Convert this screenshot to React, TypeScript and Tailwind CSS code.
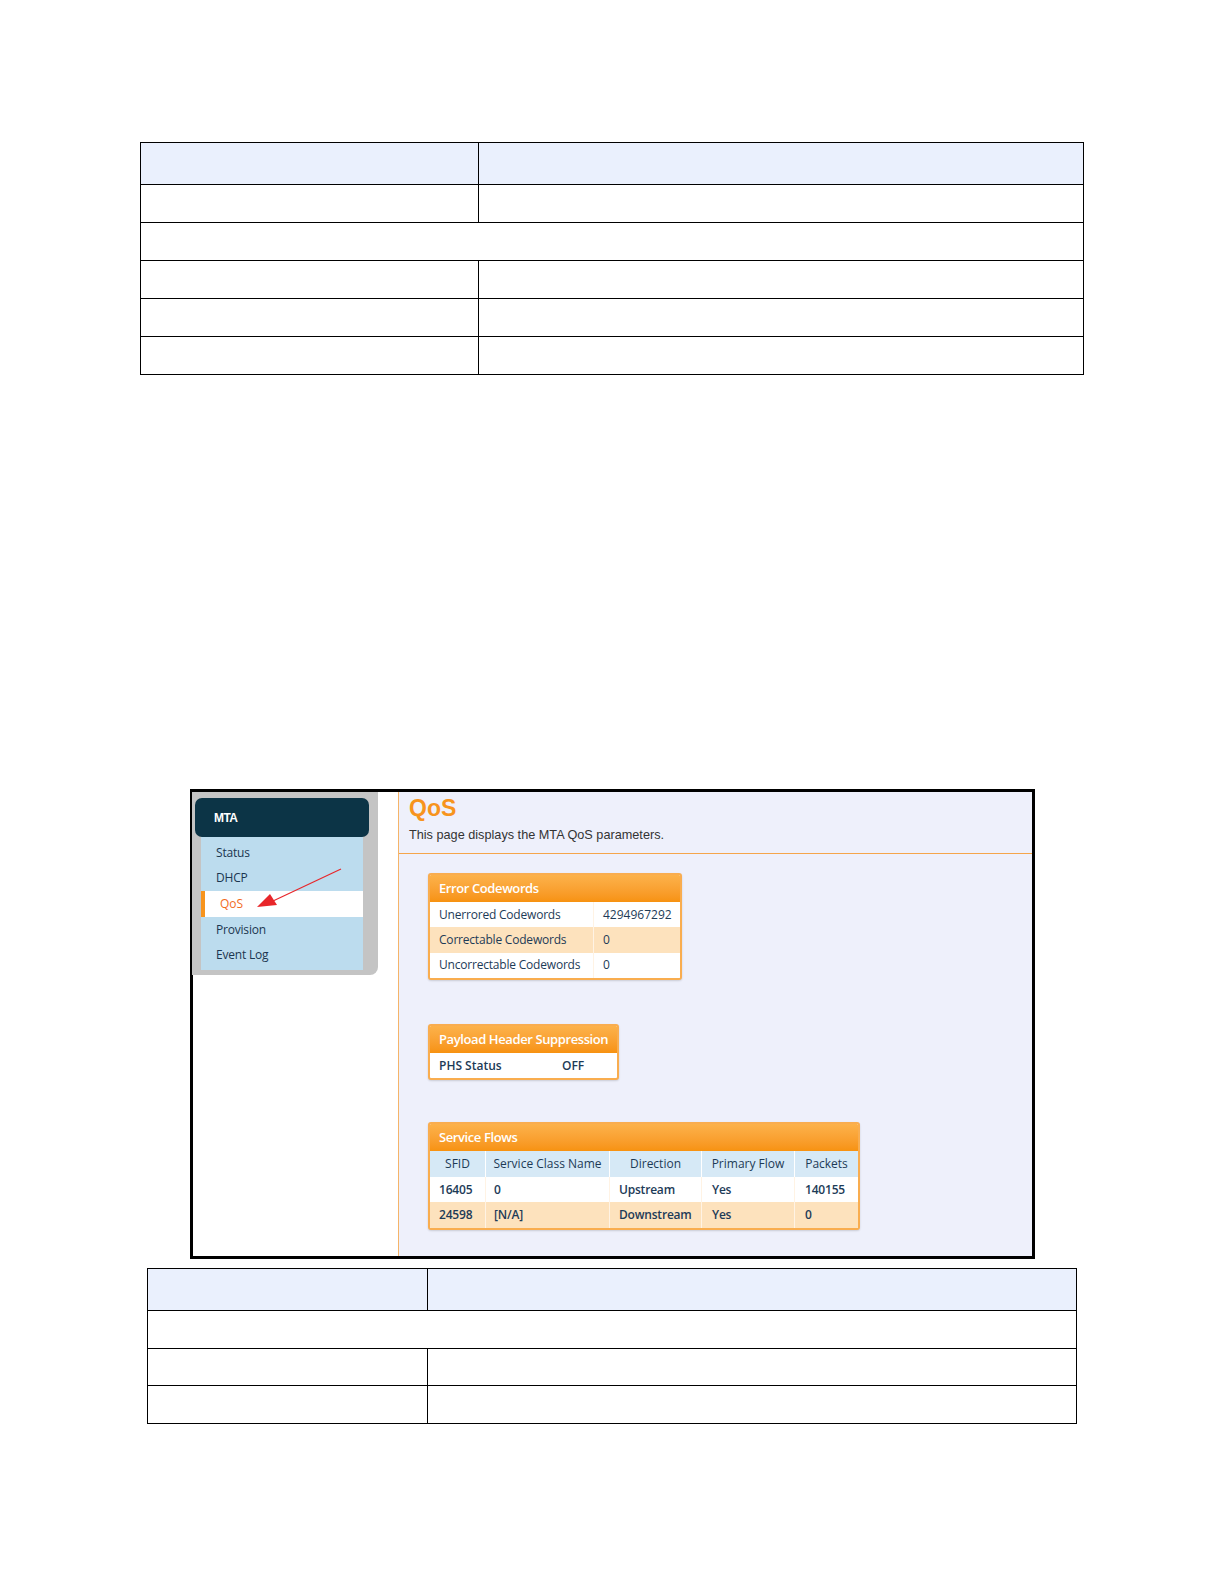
import React from "react";

const cellFont = { fontFamily: '"Open Sans", "DejaVu Sans", sans-serif' };
const arial = { fontFamily: '"Liberation Sans", Arial, sans-serif' };

function DocTable({
  widthClass,
  leftCol,
  rows,
  rowH,
}: {
  widthClass: string;
  leftCol: string;
  rows: ("split" | "full")[];
  rowH: string;
}) {
  return (
    <div className={`${widthClass} border-[1.5px] border-black bg-white`}>
      <div className="flex h-[41px] bg-[#eaf0fd]">
        <div className={`${leftCol} border-r-[1.5px] border-black`} />
        <div className="flex-1" />
      </div>
      {rows.map((r, i) =>
        r === "split" ? (
          <div key={i} className={`flex ${rowH} border-t-[1.5px] border-black`}>
            <div className={`${leftCol} border-r-[1.5px] border-black`} />
            <div className="flex-1" />
          </div>
        ) : (
          <div key={i} className={`${rowH} border-t-[1.5px] border-black`} />
        )
      )}
    </div>
  );
}

function BoxHeader({ title }: { title: string }) {
  return (
    <div
      className="flex h-[27px] items-center bg-gradient-to-b from-[#fcb24a] to-[#f7920f] pl-[9px] text-[13px] font-semibold tracking-[-0.4px] text-white"
      style={cellFont}
    >
      {title}
    </div>
  );
}

export default function App() {
  const menu = ["Status", "DHCP", "QoS", "Provision", "Event Log"];
  return (
    <div className="relative flex w-full flex-col bg-white pb-[100px]">
      <div className="ml-[140px] mt-[142px]">
        <DocTable
          widthClass="w-[944px]"
          leftCol="w-[338px]"
          rowH="h-[38px]"
          rows={["split", "full", "split", "split", "split"]}
        />
      </div>

      {/* Screenshot frame */}
      <div className="relative ml-[190px] mt-[414px] flex h-[470px] w-[845px] border-[3px] border-black bg-white">
        {/* Sidebar */}
        <div className="w-[205px] shrink-0">
          <div className="ml-[-1px] w-[186px] rounded-br-[8px] bg-[#c4c4c4] pb-[5px] pl-[3px] pr-[9px] pt-[6px]">
            <div
              className="flex h-[39px] items-center rounded-[7px] bg-[#0c3446] pl-[19px] text-[12px] font-bold tracking-[-0.6px] text-white"
              style={arial}
            >
              MTA
            </div>
            <div className="ml-[6px] w-[162px] bg-[#bcdcee] pb-[2px] pt-[3px]">
              {menu.map((m) =>
                m === "QoS" ? (
                  <div
                    key={m}
                    className="flex h-[25.6px] items-center border-l-[4px] border-[#f7941d] bg-white pl-[15px] text-[12px] text-[#f26b1d]"
                    style={cellFont}
                  >
                    {m}
                  </div>
                ) : (
                  <div
                    key={m}
                    className="flex h-[25.6px] items-center pl-[15px] text-[12px] font-medium tracking-[-0.2px] text-[#1b3650]"
                    style={cellFont}
                  >
                    {m}
                  </div>
                )
              )}
            </div>
          </div>
        </div>

        {/* Content */}
        <div className="flex flex-1 flex-col border-l border-[#f5b469] bg-[#eef0fb]">
          <div className="h-[62px] border-b border-[#f5a54a] pl-[10px] pt-[3px]">
            <div className="text-[23px] font-bold leading-[26px] text-[#f7941d]" style={arial}>
              QoS
            </div>
            <div className="mt-[7px] text-[12.7px] leading-[14px] text-[#333]" style={arial}>
              This page displays the MTA QoS parameters.
            </div>
          </div>

          <div className="flex flex-col items-start pl-[29px] pt-[19px]">
            {/* Error Codewords */}
            <div className="w-[254px] overflow-hidden rounded-[3px] border-2 border-[#f9ad4f] bg-white shadow-[0_1px_2px_rgba(0,0,0,0.15)]">
              <BoxHeader title="Error Codewords" />
              {[
                ["Unerrored Codewords", "4294967292", "bg-white"],
                ["Correctable Codewords", "0", "bg-[#fde2bd]"],
                ["Uncorrectable Codewords", "0", "bg-white"],
              ].map(([a, b, bg]) => (
                <div
                  key={a}
                  className={`flex h-[25.3px] items-center text-[12px] font-medium text-[#1d3b57] ${bg}`}
                  style={cellFont}
                >
                  <div className="flex h-full w-[164px] items-center border-r border-[#fff3e4] pl-[9px] tracking-[-0.2px]">
                    {a}
                  </div>
                  <div className="pl-[9px]">{b}</div>
                </div>
              ))}
            </div>

            {/* Payload Header Suppression */}
            <div className="mt-[44px] w-[191px] overflow-hidden rounded-[3px] border-2 border-[#f9ad4f] bg-white shadow-[0_1px_2px_rgba(0,0,0,0.15)]">
              <BoxHeader title="Payload Header Suppression" />
              <div
                className="flex h-[25.3px] items-center text-[12px] font-semibold text-[#1d3b57]"
                style={cellFont}
              >
                <div className="w-[132px] pl-[9px]">PHS Status</div>
                <div>OFF</div>
              </div>
            </div>

            {/* Service Flows */}
            <div className="mt-[42px] w-[432px] overflow-hidden rounded-[3px] border-2 border-[#f9ad4f] bg-white shadow-[0_1px_2px_rgba(0,0,0,0.15)]">
              <BoxHeader title="Service Flows" />
              <div
                className="flex h-[26px] items-center bg-[#d6e9f6] text-[12px] font-medium text-[#1d3b57]"
                style={cellFont}
              >
                <div className="flex h-full w-[56px] items-center justify-center border-r border-white">SFID</div>
                <div className="flex h-full w-[124px] items-center justify-center border-r border-white">Service Class Name</div>
                <div className="flex h-full w-[92px] items-center justify-center border-r border-white">Direction</div>
                <div className="flex h-full w-[93px] items-center justify-center border-r border-white">Primary Flow</div>
                <div className="flex h-full flex-1 items-center justify-center">Packets</div>
              </div>
              {[
                ["16405", "0", "Upstream", "Yes", "140155", "bg-white"],
                ["24598", "[N/A]", "Downstream", "Yes", "0", "bg-[#fde2bd]"],
              ].map(([a, b, c, d, e, bg]) => (
                <div
                  key={a}
                  className={`flex h-[25.3px] items-center text-[12px] font-semibold tracking-[-0.2px] text-[#1d3b57] ${bg}`}
                  style={cellFont}
                >
                  <div className="flex h-full w-[56px] items-center border-r border-[#fff3e4] pl-[9px]">{a}</div>
                  <div className="flex h-full w-[124px] items-center border-r border-[#fff3e4] pl-[8px]">{b}</div>
                  <div className="flex h-full w-[92px] items-center border-r border-[#fff3e4] pl-[9px]">{c}</div>
                  <div className="flex h-full w-[93px] items-center border-r border-[#fff3e4] pl-[10px]">{d}</div>
                  <div className="flex h-full flex-1 items-center pl-[10px]">{e}</div>
                </div>
              ))}
            </div>
          </div>
        </div>

        {/* Red arrow annotation */}
        <svg
          className="pointer-events-none absolute left-[62px] top-[74px]"
          width="90"
          height="50"
          viewBox="0 0 90 50"
        >
          <line x1="86" y1="3" x2="18" y2="35" stroke="#e8262a" strokeWidth="1.2" />
          <polygon points="2,41 15,28 22,39" fill="#e8262a" />
        </svg>
      </div>

      <div className="ml-[147px] mt-[9px]">
        <DocTable
          widthClass="w-[930px]"
          leftCol="w-[280px]"
          rowH="h-[37.5px]"
          rows={["full", "split", "split"]}
        />
      </div>
    </div>
  );
}
